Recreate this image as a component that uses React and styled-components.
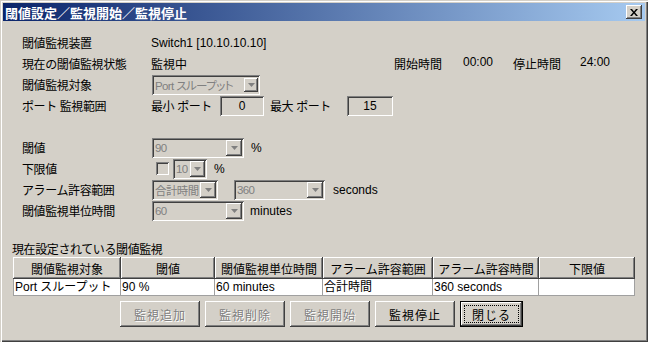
import React from 'react';
import styled, { createGlobalStyle } from 'styled-components';

const GlobalStyle = createGlobalStyle`
  html, body {
    margin: 0;
    padding: 0;
    background: #d4d0c8;
  }
  body {
    font-family: "Liberation Sans", "Noto Sans CJK JP", sans-serif;
    font-size: 12px;
    color: #000;
  }
`;

const raised = `
  box-shadow: inset -1px -1px #404040, inset 1px 1px #fff,
    inset -2px -2px #808080, inset 2px 2px #d4d0c8;
`;

const sunken = `
  box-shadow: inset 1px 1px #808080, inset -1px -1px #fff,
    inset 2px 2px #404040, inset -2px -2px #d4d0c8;
`;

const Window = styled.div`
  width: 648px;
  height: 342px;
  box-sizing: border-box;
  padding: 3px;
  background: #d4d0c8;
  box-shadow: inset 1px 1px #d4d0c8, inset 2px 2px #fff,
    inset -1px -1px #404040, inset -2px -2px #808080;
  display: flex;
  flex-direction: column;
`;

const TitleBar = styled.div`
  height: 18px;
  display: flex;
  align-items: center;
  justify-content: space-between;
  padding: 0 3px 0 2px;
  background: linear-gradient(to right, #0a246a, #a6caf0);
`;

const Title = styled.span`
  color: #fff;
  font-weight: bold;
  font-size: 13px;
`;

const CloseBox = styled.div`
  width: 16px;
  height: 14px;
  background: #d4d0c8;
  ${raised};
  display: flex;
  align-items: center;
  justify-content: center;
`;

const Body = styled.div`
  flex: 1;
  padding: 11px 0 0 19px;
`;

const Form = styled.div`
  display: grid;
  grid-template-columns: 129px 1fr;
  grid-auto-rows: 21px;
  align-items: center;
`;

const Label = styled.div`
  white-space: nowrap;
  letter-spacing: -0.4px;
`;

const Value = styled.div`
  display: flex;
  align-items: center;
  white-space: nowrap;
`;

const Blank = styled.div`
  grid-column: 1 / 3;
`;

const StatusRow = styled.div`
  display: grid;
  grid-template-columns: 243px 69px 50px 67px auto;
  white-space: nowrap;
`;

const PortLabel = styled.span`
  width: ${(p) => p.$w}px;
  margin-left: ${(p) => p.$ml || 0}px;
  letter-spacing: -0.4px;
`;

const Field = styled.div`
  width: ${(p) => p.$w}px;
  height: 20px;
  box-sizing: border-box;
  ${sunken};
  display: flex;
  align-items: center;
  justify-content: center;
`;

const ComboBox = styled.div`
  width: ${(p) => p.$w}px;
  height: ${(p) => p.$h || 20}px;
  margin-left: ${(p) => p.$ml || 1}px;
  box-sizing: border-box;
  padding: 2px;
  ${sunken};
  display: flex;
  align-items: center;
  color: #808080;
`;

const ComboText = styled.span`
  flex: 1;
  min-width: 0;
  padding-left: 1px;
  overflow: hidden;
  white-space: nowrap;
  font-size: 11.5px;
  font-feature-settings: "palt";
  letter-spacing: -0.6px;
`;

const ComboButton = styled.div`
  flex: none;
  width: ${(p) => p.$bw || 16}px;
  height: ${(p) => p.$bh || 16}px;
  background: #d4d0c8;
  ${raised};
  display: flex;
  align-items: center;
  justify-content: center;
`;

const Unit = styled.span`
  margin-left: ${(p) => p.$ml}px;
`;

const CheckBox = styled.div`
  width: 13px;
  height: 13px;
  margin-left: 5px;
  box-sizing: border-box;
  ${sunken};
`;

const Section = styled.div`
  margin-top: 22px;
  margin-left: -10px;
`;

const SectionLabel = styled.div`
  line-height: 14px;
  height: 14px;
  letter-spacing: -0.4px;
`;

const Table = styled.div`
  display: grid;
  grid-template-columns: 108px 94px 108px 110px 106px 96px;
  margin-left: 1px;
`;

const HeadCell = styled.div`
  height: 22px;
  background: #d4d0c8;
  ${raised};
  display: flex;
  align-items: center;
  justify-content: center;
  white-space: nowrap;
`;

const DataCell = styled.div`
  height: 17px;
  box-sizing: border-box;
  background: #fff;
  border-right: 1px solid #a0a0a0;
  border-bottom: 1px solid #a0a0a0;
  border-left: ${(p) => (p.$first ? '1px solid #a0a0a0' : 'none')};
  padding-left: 1px;
  line-height: 16px;
  white-space: nowrap;
  overflow: hidden;
`;

const ButtonRow = styled.div`
  display: flex;
  gap: 5px;
  margin: 5px 0 0 108px;
`;

const Button = styled.div`
  width: ${(p) => p.$w || 80}px;
  height: 26px;
  box-sizing: border-box;
  background: #d4d0c8;
  ${raised};
  display: flex;
  align-items: center;
  justify-content: center;
  letter-spacing: 1px;
  color: ${(p) => (p.$disabled ? '#808080' : '#000')};
  text-shadow: ${(p) => (p.$disabled ? '1px 1px #fff' : 'none')};
`;

const DefaultButton = styled(Button)`
  border: 1px solid #000;
  box-shadow: inset -1px -1px #404040, inset 1px 1px #fff,
    inset -2px -2px #808080;
  padding: 3px;
`;

const FocusRing = styled.div`
  width: 100%;
  height: 100%;
  box-sizing: border-box;
  border: 1px dotted #000;
  display: flex;
  align-items: center;
  justify-content: center;
`;

const Arrow = ({ color = '#808080' }) => (
  <svg width="7" height="4" viewBox="0 0 7 4">
    <polygon points="0,0 7,0 3.5,4" fill={color} />
  </svg>
);

const Combo = ({ text, w, h, ml, bw, bh }) => (
  <ComboBox $w={w} $h={h} $ml={ml}>
    <ComboText>{text}</ComboText>
    <ComboButton $bw={bw} $bh={bh}>
      <Arrow />
    </ComboButton>
  </ComboBox>
);

const headers = ['閾値監視対象', '閾値', '閾値監視単位時間', 'アラーム許容範囲', 'アラーム許容時間', '下限値'];
const row = ['Port スループット', '90 %', '60 minutes', '合計時間', '360 seconds', ''];

export default function App() {
  return (
    <Window>
      <GlobalStyle />
      <TitleBar>
        <Title>閾値設定／監視開始／監視停止</Title>
        <CloseBox>
          <svg width="8" height="7" viewBox="0 0 8 7">
            <path d="M0 0h2l2 2.5L6 0h2L5 3.5 8 7H6L4 4.5 2 7H0l3-3.5z" fill="#000" />
          </svg>
        </CloseBox>
      </TitleBar>
      <Body>
        <Form>
          <Label>閾値監視装置</Label>
          <Value>Switch1 [10.10.10.10]</Value>

          <Label>現在の閾値監視状態</Label>
          <StatusRow>
            <span>監視中</span>
            <span>開始時間</span>
            <span>00:00</span>
            <span>停止時間</span>
            <span>24:00</span>
          </StatusRow>

          <Label>閾値監視対象</Label>
          <Value>
            <Combo text="Port スループット" w={108} h={20} bw={14} bh={14} />
          </Value>

          <Label>ポート 監視範囲</Label>
          <Value>
            <PortLabel $w={69}>最小 ポート</PortLabel>
            <Field $w={44}>0</Field>
            <PortLabel $w={77} $ml={6}>最大 ポート</PortLabel>
            <Field $w={46}>15</Field>
          </Value>

          <Blank />

          <Label>閾値</Label>
          <Value>
            <Combo text="90" w={92} />
            <Unit $ml={7}>%</Unit>
          </Value>

          <Label>下限値</Label>
          <Value>
            <CheckBox />
            <Combo text="10" w={34} ml={4} bw={15} />
            <Unit $ml={7}>%</Unit>
          </Value>

          <Label>アラーム許容範囲</Label>
          <Value>
            <Combo text="合計時間" w={66} />
            <Combo text="360" w={91} ml={16} />
            <Unit $ml={8}>seconds</Unit>
          </Value>

          <Label>閾値監視単位時間</Label>
          <Value>
            <Combo text="60" w={92} />
            <Unit $ml={6}>minutes</Unit>
          </Value>
        </Form>

        <Section>
          <SectionLabel>現在設定されている閾値監視</SectionLabel>
          <Table>
            {headers.map((h) => (
              <HeadCell key={h}>{h}</HeadCell>
            ))}
            {row.map((c, i) => (
              <DataCell key={i} $first={i === 0}>{c}</DataCell>
            ))}
          </Table>
          <ButtonRow>
            <Button $disabled>監視追加</Button>
            <Button $disabled>監視削除</Button>
            <Button $disabled>監視開始</Button>
            <Button>監視停止</Button>
            <DefaultButton $w={63}>
              <FocusRing>閉じる</FocusRing>
            </DefaultButton>
          </ButtonRow>
        </Section>
      </Body>
    </Window>
  );
}
